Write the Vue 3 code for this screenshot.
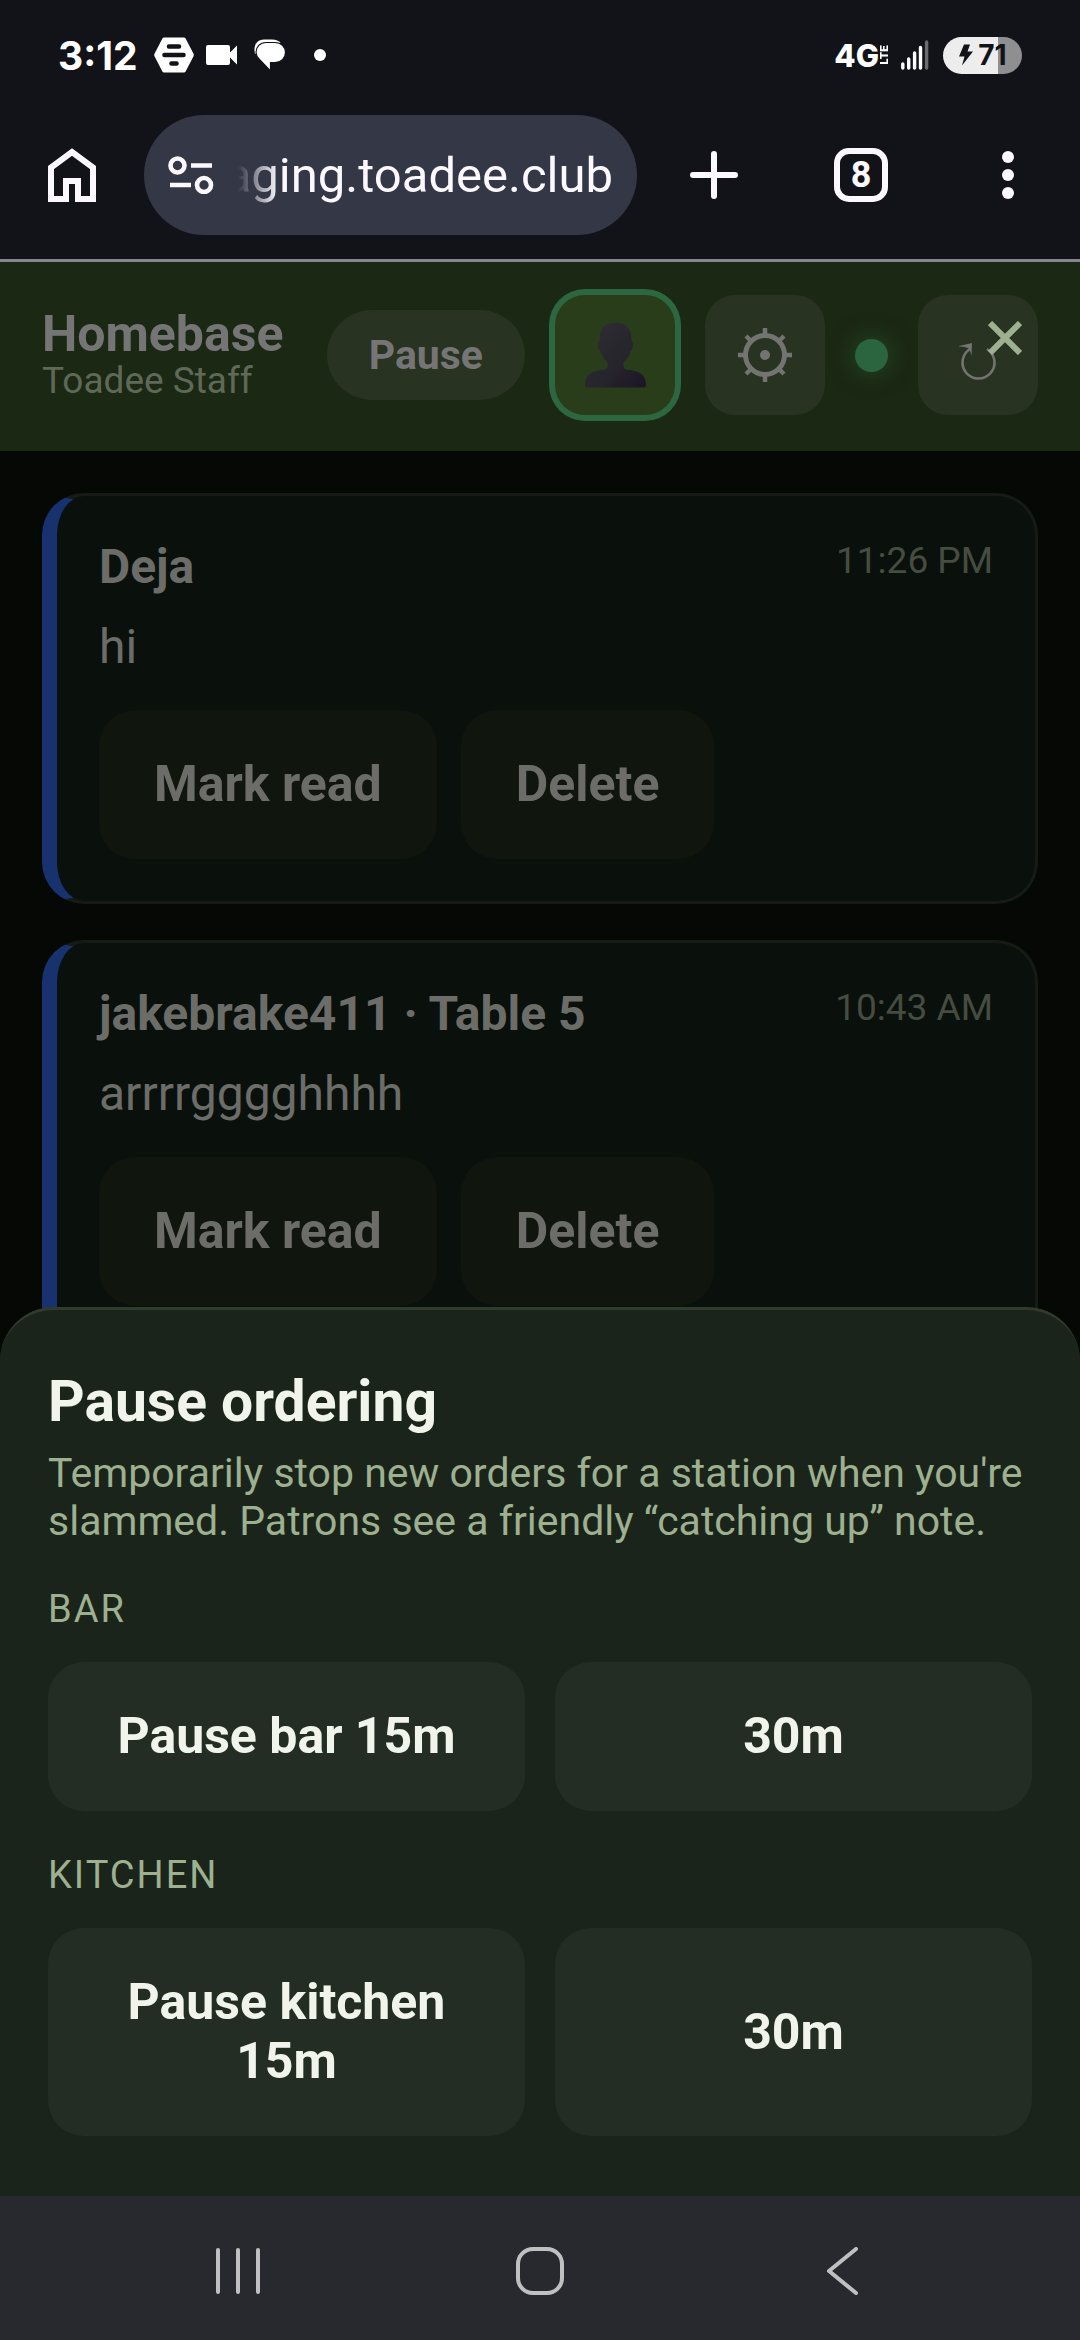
<script setup>
import { ref } from 'vue'

const address = ref('staging.toadee.club')

const messages = ref([
  { id: 1, from: 'Deja', time: '11:26 PM', body: 'hi' },
  { id: 2, from: 'jakebrake411 · Table 5', time: '10:43 AM', body: 'arrrrgggghhhh' }
])

const stations = [
  { id: 'bar', label: 'Bar', action: 'Pause bar 15m' },
  { id: 'kitchen', label: 'Kitchen', action: 'Pause kitchen 15m' }
]

const sheetOpen = ref(true)

const remove = (id) => {
  messages.value = messages.value.filter((m) => m.id !== id)
}
</script>

<template>
  <div class="screen">
    <div class="status-bar">
      <div class="status-left">
        <span class="clock">3:12</span>
        <svg class="hex" viewBox="0 0 40 36" aria-hidden="true">
          <path d="M10 0.5h20q1 0 1.500.8l8 15.500q.6 1.200 0 2.400l-8 15.500q-.5.8-1.500.8h-20q-1 0-1.500-.8l-8-15.500q-.6-1.200 0-2.400l8-15.500q.5-.8 1.500-.8z" fill="#fff" />
          <path d="M15 9.500h10M10.500 18h19M17.500 26.500h5" stroke="#121318" stroke-width="4.600" stroke-linecap="round" />
        </svg>
        <svg class="cam" viewBox="0 0 32 20" aria-hidden="true">
          <path d="M2 0h20q2 0 2 2v5.500l7-7v19l-7-7V18q0 2-2 2H2q-2 0-2-2V2q0-2 2-2z" fill="#fff" />
        </svg>
        <svg class="chat" viewBox="0 0 32 32" aria-hidden="true">
          <path d="M1 15C-1 6 3 .5 10 .5h8c4 0 7 1.500 8.500 3.500" fill="#fff" />
          <path d="M12 3.500h9c6 0 10.500 4.500 10.500 10s-4.500 10-10.500 10h-4.500V32L5.500 20.500C3.500 18.500 2 16.500 2 13.500c0-5.500 4-10 10-10z" fill="#fff" stroke="#121318" stroke-width="1.200" />
        </svg>
        <span class="more-dot"></span>
      </div>
      <div class="status-right">
        <span class="network">4G<small>LTE</small></span>
        <svg class="signal" viewBox="0 0 28 30" aria-hidden="true">
          <path d="M1.800 24v4M7.700 19v9M13.600 13v15M19.500 7.500v20.500" stroke="#fff" stroke-width="3.400" stroke-linecap="round" />
          <path d="M25.600 2v26" stroke="#6b6c70" stroke-width="3.400" stroke-linecap="round" />
        </svg>
        <span class="battery">
          <svg viewBox="0 0 16 22" aria-hidden="true">
            <path d="M6 .5h6L9.500 7.500H15L4 21.500l2.500-9H1z" fill="#121318" />
          </svg>
          71
        </span>
      </div>
    </div>

    <div class="browser-bar">
      <button class="chrome-btn" type="button" aria-label="Home page">
        <svg class="home" viewBox="0 0 48 54" fill="none" stroke="#fbf8ff" stroke-width="6">
          <path d="M3 51V19.500L24 4l21 15.500V51H30V33H18v18z" />
        </svg>
      </button>
      <label class="address">
        <svg class="tune" viewBox="0 0 46 38" fill="none" stroke="#fbf8ff" stroke-width="4.600" aria-hidden="true">
          <circle cx="9.500" cy="9.500" r="7" />
          <circle cx="36" cy="29" r="7" />
          <path d="M23 9.500h21M2 29h21" />
        </svg>
        <input v-model="address" type="text" aria-label="Address" />
      </label>
      <div class="chrome-actions">
        <button class="chrome-btn" type="button" aria-label="New tab">
          <svg class="plus" viewBox="0 0 48 48" fill="none" stroke="#fbf8ff" stroke-width="6" stroke-linecap="round">
            <path d="M24 3v42M3 24h42" />
          </svg>
        </button>
        <button class="chrome-btn tabs" type="button" aria-label="Open tabs"><span>8</span></button>
        <button class="chrome-btn" type="button" aria-label="Menu">
          <svg class="kebab" viewBox="0 0 12 48" fill="#fbf8ff">
            <circle cx="6" cy="6" r="6" />
            <circle cx="6" cy="24" r="6" />
            <circle cx="6" cy="42" r="6" />
          </svg>
        </button>
      </div>
    </div>

    <div class="viewport">
      <header class="topbar">
        <div class="brand">
          <h1>Homebase</h1>
          <p>Toadee Staff</p>
        </div>
        <div class="tools">
          <button class="pill" type="button" @click="sheetOpen = true">Pause</button>
          <button class="tool active" type="button" aria-label="Profile">
            <svg class="person" viewBox="0 0 62 66">
              <defs>
                <linearGradient id="bust" x1="0" y1="0" x2="1" y2="1">
                  <stop offset="0" stop-color="#302f33" />
                  <stop offset="0.6" stop-color="#26242c" />
                  <stop offset="1" stop-color="#1a1525" />
                </linearGradient>
              </defs>
              <path d="M31 0C21 0 15 6 15 14.500V18c-2.500 1-2.500 9 .5 11 1.500 5 4.500 8.500 7.500 11.500V44c0 2-1 3.500-4 4C8 49 0 52 0 63q0 3 2 3h58q2 0 2-3c0-11-8-14-19-15-3-.5-4-2-4-4v-3.500c3-3 6-6.500 7.500-11.500 3-2 3-10 .5-11v-3.500C47 6 41 0 31 0z" fill="url(#bust)" />
            </svg>
          </button>
          <button class="tool" type="button" aria-label="Settings">
            <svg class="gear" viewBox="-27 -27 54 54" fill="none" stroke="#737371">
              <circle r="19.500" stroke-width="5" />
              <circle r="5" fill="#737371" stroke="none" />
              <path d="M0-21v-6M0 21v6M-21 0h-6M21 0h6M15 15l4 4M-15 15l-4 4M15-15l4-4M-15-15l-4-4" stroke-width="4.500" />
            </svg>
          </button>
          <span class="online" role="img" aria-label="Online"></span>
          <button class="tool" type="button" aria-label="Refresh">
            <svg class="refresh" viewBox="0 0 38 38">
              <path d="M28 6A16 16 0 1 1 11 6" fill="none" stroke="#737371" stroke-width="2.600" />
              <path d="M0 3L13 0l-.5 13q-1-5-3-7.500-3-2-9.500-2z" fill="#737371" />
            </svg>
          </button>
        </div>
      </header>

      <main class="feed">
        <article v-for="message in messages" :key="message.id" class="card">
          <div class="card-head">
            <h2>{{ message.from }}</h2>
            <time>{{ message.time }}</time>
          </div>
          <p>{{ message.body }}</p>
          <div class="card-actions">
            <button type="button">Mark read</button>
            <button type="button" @click="remove(message.id)">Delete</button>
          </div>
        </article>
      </main>

      <template v-if="sheetOpen">
        <button class="close" type="button" aria-label="Close" @click="sheetOpen = false">
          <svg viewBox="0 0 34 34" stroke="#9db08f" stroke-width="6">
            <path d="M2 2l30 30M32 2L2 32" />
          </svg>
        </button>
        <section class="sheet" role="dialog" aria-labelledby="sheet-title">
          <h2 id="sheet-title">Pause ordering</h2>
          <p>
            Temporarily stop new orders for a station when you're slammed. Patrons see a friendly
            “catching up” note.
          </p>
          <div v-for="station in stations" :key="station.id" class="station">
            <h3>{{ station.label }}</h3>
            <div class="station-row">
              <button type="button">{{ station.action }}</button>
              <button type="button">30m</button>
            </div>
          </div>
        </section>
      </template>
    </div>

    <nav class="system-nav" aria-label="System">
      <button type="button" aria-label="Recent apps">
        <svg viewBox="0 0 48 48">
          <path d="M4 3v42M24 3v42M44 3v42" />
        </svg>
      </button>
      <button type="button" aria-label="Home">
        <svg viewBox="0 0 48 48">
          <rect x="2" y="2" width="44" height="44" rx="15" />
        </svg>
      </button>
      <button type="button" aria-label="Back">
        <svg viewBox="0 0 48 48">
          <path d="M38 2L11 24l27 22" />
        </svg>
      </button>
    </nav>
  </div>
</template>

<style>
body {
  margin: 0;
  background: #050805;
}
</style>

<style scoped>
.screen {
  display: flex;
  flex-direction: column;
  height: 100vh;
  overflow: hidden;
  font-family: Roboto, 'Liberation Sans', sans-serif;
  color: #6c6d69;
}

h1,
h2,
h3,
p {
  margin: 0;
}

button {
  border: 0;
  padding: 0;
  background: none;
  color: inherit;
  font: inherit;
  cursor: pointer;
}

svg {
  display: block;
  flex: none;
}

/* status bar */
.status-bar {
  flex: none;
  display: flex;
  align-items: center;
  justify-content: space-between;
  height: 110px;
  padding: 0 58px;
  background: #121318;
  color: #fff;
}

.status-left,
.status-right {
  display: flex;
  align-items: center;
}

.clock {
  font-family: Inter, Roboto, sans-serif;
  font-size: 39px;
  font-weight: 700;
  margin-right: 16px;
}

.hex {
  width: 40px;
  height: 36px;
  margin-right: 12px;
}

.cam {
  width: 32px;
  height: 20px;
  margin-right: 16px;
}

.chat {
  width: 32px;
  height: 32px;
}

.more-dot {
  width: 12px;
  height: 12px;
  margin-left: 28px;
  border-radius: 50%;
  background: #fff;
}

.network {
  display: flex;
  align-items: center;
  margin-right: 12px;
  font-family: Inter, Roboto, sans-serif;
  font-size: 31px;
  font-weight: 800;
}

.network small {
  writing-mode: vertical-rl;
  transform: rotate(180deg);
  font-size: 11px;
  line-height: 10px;
}

.signal {
  width: 28px;
  height: 30px;
  margin-right: 14px;
}

.battery {
  display: flex;
  align-items: center;
  justify-content: center;
  gap: 4px;
  width: 79px;
  height: 37px;
  border-radius: 19px;
  background: linear-gradient(90deg, #ededed 70%, #8f8f91 70%);
  color: #121318;
  font-family: Inter, Roboto, sans-serif;
  font-size: 28px;
  font-weight: 700;
}

.battery svg {
  width: 16px;
  height: 22px;
}

/* browser toolbar */
.browser-bar {
  flex: none;
  display: flex;
  align-items: center;
  padding: 5px 0 24px;
  border-bottom: 3px solid #85858f;
  background: #121318;
  color: #fbf8ff;
}

.chrome-btn {
  display: flex;
  align-items: center;
  justify-content: center;
  flex: none;
  width: 144px;
  height: 120px;
}

.chrome-actions {
  display: flex;
  gap: 3px;
}

.home {
  width: 48px;
  height: 54px;
}

.address {
  flex: 1;
  min-width: 0;
  display: flex;
  align-items: center;
  gap: 24px;
  height: 120px;
  margin-right: 5px;
  padding: 0 24px;
  box-sizing: border-box;
  border-radius: 60px;
  background: #343745;
}

.tune {
  width: 46px;
  height: 38px;
}

/* long hosts keep their right end visible and fade out on the left */
.address input {
  flex: 1;
  min-width: 0;
  height: 72px;
  padding: 0;
  border: 0;
  outline: 0;
  background: none;
  color: inherit;
  font-family: Roboto, sans-serif;
  font-size: 49px;
  direction: rtl;
  mask-image: linear-gradient(90deg, transparent, #000 40px);
}

.plus {
  width: 48px;
  height: 48px;
}

.tabs span {
  display: flex;
  align-items: center;
  justify-content: center;
  width: 54px;
  height: 54px;
  box-sizing: border-box;
  border: 6px solid #fbf8ff;
  border-radius: 15px;
  font-size: 36px;
  font-weight: 700;
}

.kebab {
  width: 12px;
  height: 48px;
}

/* page */
.viewport {
  flex: 1;
  min-height: 0;
  position: relative;
  overflow: hidden;
  background: #050805;
}

.topbar {
  display: flex;
  align-items: center;
  justify-content: space-between;
  padding: 33px 42px 36px;
  background: #1b2813;
}

.brand h1 {
  font-size: 50px;
  line-height: 52px;
  font-weight: 700;
  color: #757575;
}

.brand p {
  font-size: 37px;
  line-height: 42px;
  color: #5f6957;
}

.tools {
  display: flex;
  align-items: center;
  gap: 30px;
}

/* the active ring takes 6px of the gap beside the pill */
.pill {
  height: 90px;
  padding: 0 42px;
  border-radius: 45px;
  background: #283321;
  color: #757575;
  font-size: 41px;
  font-weight: 700;
}

.tool {
  display: flex;
  align-items: center;
  justify-content: center;
  width: 120px;
  height: 120px;
  border-radius: 30px;
  background: #283321;
}

.tool.active {
  background: #293d1b;
  box-shadow: 0 0 0 6px #2d673f;
}

.person {
  width: 61px;
  height: 66px;
}

.gear {
  width: 54px;
  height: 54px;
}

.refresh {
  width: 38px;
  height: 38px;
  margin-top: 14px;
}

.online {
  width: 33px;
  height: 33px;
  border-radius: 50%;
  background: #2b653f;
  box-shadow: 0 0 24px rgba(43, 101, 63, 0.6);
}

.feed {
  display: flex;
  flex-direction: column;
  gap: 36px;
  padding: 42px;
}

.card {
  padding: 42px;
  border: 3px solid #151c13;
  border-left: 15px solid #17326e;
  border-radius: 42px;
  background: #0a100c;
}

.card-head {
  display: flex;
  align-items: flex-start;
  justify-content: space-between;
}

.card h2 {
  font-size: 48px;
  line-height: 57px;
  font-weight: 700;
}

.card time {
  font-size: 37px;
  line-height: 45px;
  color: #474c41;
}

.card p {
  margin: 18px 0 30px;
  font-size: 48px;
  line-height: 67px;
}

.card-actions {
  display: flex;
  gap: 24px;
}

.card-actions button,
.station-row button {
  padding: 45px 55px;
  border-radius: 36px;
  font-size: 50px;
  line-height: 59px;
  font-weight: 700;
}

.card-actions button {
  background: #10150e;
}

/* pause sheet */
.close {
  position: absolute;
  top: 43px;
  right: 42px;
  width: 66px;
  height: 66px;
  display: flex;
  align-items: center;
  justify-content: center;
}

.close svg {
  width: 34px;
  height: 34px;
}

.sheet {
  position: absolute;
  left: 0;
  right: 0;
  bottom: 0;
  padding: 57px 48px 60px;
  border-top: 3px solid #2f3c2b;
  border-radius: 54px 54px 0 0;
  background: #1b241b;
  color: #f0f4ea;
}

.sheet h2 {
  font-size: 57px;
  line-height: 70px;
  font-weight: 700;
}

.sheet p {
  margin-top: 12px;
  font-size: 41px;
  line-height: 48px;
  color: #9db08f;
}

.station {
  margin-top: 42px;
}

.station h3 {
  margin-bottom: 30px;
  font-size: 38px;
  line-height: 45px;
  font-weight: 400;
  letter-spacing: 2px;
  text-transform: uppercase;
  color: #9db08f;
}

.station-row {
  display: grid;
  grid-template-columns: 1fr 1fr;
  gap: 30px;
}

.station-row button {
  background: #242d23;
}

/* system navigation */
.system-nav {
  flex: none;
  display: flex;
  align-items: center;
  justify-content: center;
  gap: 254px;
  height: 144px;
  padding-top: 6px;
  box-sizing: border-box;
  background: #28292e;
}

.system-nav svg {
  width: 48px;
  height: 48px;
  fill: none;
  stroke: #c0c0c2;
  stroke-width: 4;
  stroke-linecap: round;
  stroke-linejoin: round;
}
</style>
